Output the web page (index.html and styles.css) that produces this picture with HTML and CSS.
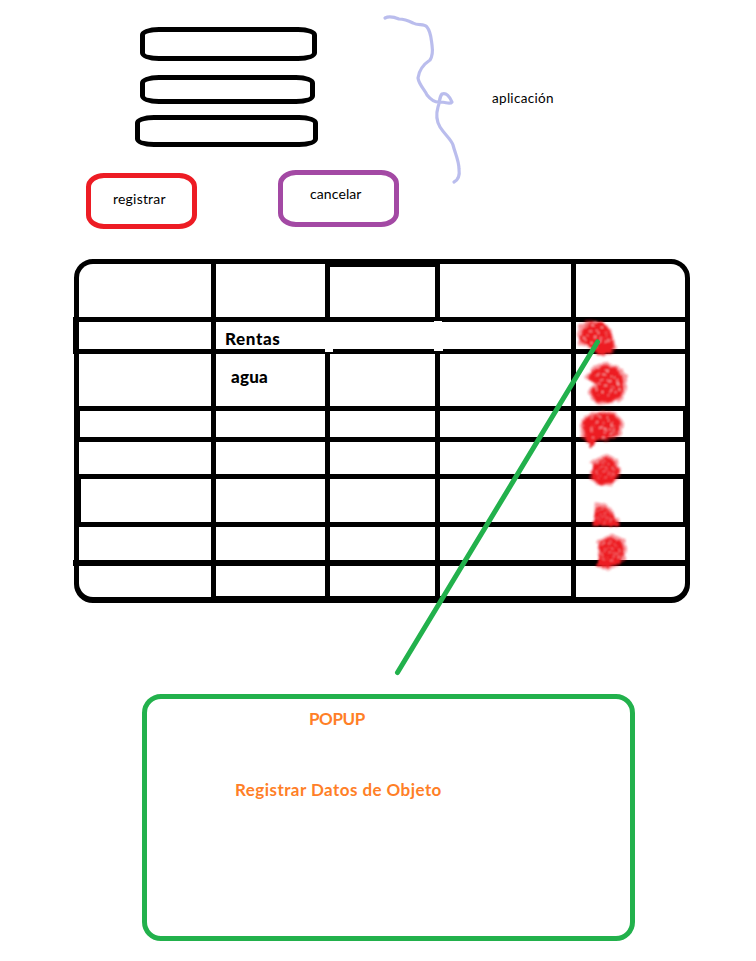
FILE: index.html
```html
<!DOCTYPE html>
<html lang="es">
<head>
<meta charset="utf-8">
<title>Registro</title>
<link rel="stylesheet" href="styles.css">
</head>
<body>
<main class="page">
  <header class="top">
    <div class="fields">
      <div class="field field-a"></div>
      <div class="field field-b"></div>
      <div class="field field-c"></div>
    </div>
    <svg class="brace" width="90" height="175" viewBox="380 12 90 175">
      <path d="M385 18C389 16 394 17 399 19C405 19 409 21 413 23C418 26 424 23 427 27C431 32 431 38 432 45C433 52 432 57 430 60C424 64 419 70 418 78C419 85 425 90 427 95C431 100 436 103 441 102C446 102 450 105 452 102C450 97 446 92 442 94C439 97 440 102 438 107C436 114 437 122 440 127C445 135 451 139 453 145C455 153 459 161 459 169C460 176 458 180 454 182"/>
    </svg>
    <span class="label">aplicación</span>
  </header>
  <div class="actions">
    <div class="btn register"><span>registrar</span></div>
    <div class="btn cancel"><span>cancelar</span></div>
  </div>
  <section class="table">
    <div class="cell"></div><div class="cell"></div><div class="cell thick-top"></div><div class="cell"></div><div class="cell"></div>
    <div class="cell bump-row"></div><div class="cell merged"><b class="rentas">Rentas</b><i class="notch n1"></i><i class="notch n2"></i><i class="notch n3"></i></div><div class="cell"></div>
    <div class="cell"></div><div class="cell"><b class="agua">agua</b></div><div class="cell"></div><div class="cell"></div><div class="cell"></div>
    <div class="cell in-l1"></div><div class="cell"></div><div class="cell"></div><div class="cell"></div><div class="cell in-r"></div>
    <div class="cell"></div><div class="cell"></div><div class="cell"></div><div class="cell"></div><div class="cell"></div>
    <div class="cell in-l2"></div><div class="cell"></div><div class="cell"></div><div class="cell"></div><div class="cell in-r"></div>
    <div class="cell"></div><div class="cell"></div><div class="cell"></div><div class="cell"></div><div class="cell"></div>
    <div class="cell last bump-line"></div><div class="cell last short"></div><div class="cell last short"></div><div class="cell last short"></div><div class="cell last"></div>
  </section>
  <section class="popup">
    <h1>POPUP</h1>
    <h2>Registrar Datos de Objeto</h2>
  </section>
  <svg class="marks" width="756" height="961" viewBox="0 0 756 961">
    <defs>
      <filter id="crayon" x="-20%" y="-20%" width="140%" height="140%">
        <feTurbulence type="fractalNoise" baseFrequency="0.22" numOctaves="2" seed="4" result="n"/>
        <feDisplacementMap in="SourceGraphic" in2="n" scale="4" xChannelSelector="R" yChannelSelector="G"/>
        <feGaussianBlur stdDeviation="0.8"/>
      </filter>
      <g id="flecks">
        <path d="M-11-7l3-4M-5-10l4 1M4-9l3 3M10-4l1 5M-12 2l2 4M-7-3l3-2M0-4l3 2M-3 2l4-1M6 3l3 1M-6 7l2 2M2 8l3-2M8 9l2-3M-10 10l2 1M-1 12l3-1M12 4l1 3M-2-13l3 1M3 2l2 3M-9-1l1 2"/>
      </g>
    </defs>
    <g filter="url(#crayon)">
      <g class="halo">
        <path d="M578 335L579 325L586 321L593 319L602 322L611 329L613 337L616 346L612 354L603 356L595 353L589 348L578 344Z"/>
        <path d="M584 377L591 372L593 366L604 362L618 366L627 376L627 389L622 400L612 403L600 405L592 400L588 391L595 384Z"/>
        <path d="M580 425L585 415L598 411L616 412L624 424L620 437L608 441L597 441L592 448L586 442L581 437Z"/>
        <path d="M590 462L606 454L617 459L621 470L618 480L611 486L598 485L590 479L590 471L596 467Z"/>
        <path d="M595 502L604 503L613 511L620 522L620 526L592 526L594 516Z"/>
        <path d="M597 541L605 537L612 534L624 539L627 549L625 560L616 567L606 570L595 566L599 558L597 551Z"/>
      </g>
      <g class="core">
        <path d="M583 332L587 324L596 321L605 326L610 334L613 346L610 352L601 354L594 349L588 344L581 340Z"/>
        <path d="M589 378L595 371L605 366L616 369L622 378L622 391L616 399L604 402L596 400L592 391L598 384Z"/>
        <path d="M584 424L589 417L600 414L614 415L620 424L616 434L606 438L596 439L592 446L587 440Z"/>
        <path d="M594 465L606 458L614 463L618 472L612 482L600 483L593 478Z"/>
        <path d="M597 508L605 508L611 514L618 525L594 525Z"/>
        <path d="M600 543L610 538L621 543L623 552L619 562L608 567L597 565L601 557Z"/>
      </g>
      <g class="fleck">
        <use href="#flecks" x="596" y="335"/>
        <use href="#flecks" x="607" y="384"/>
        <use href="#flecks" x="602" y="426"/>
        <use href="#flecks" transform="translate(605 470) scale(.75)"/>
        <use href="#flecks" transform="translate(604 516) scale(.6)"/>
        <use href="#flecks" transform="translate(611 551) scale(.8)"/>
      </g>
    </g>
    <path class="pointer" d="M597.500 342L397.500 672.500"/>
  </svg>
</main>
</body>
</html>
```
FILE: styles.css
```css
* { box-sizing: border-box; }
body { margin: 0; background: #fff; color: #000; font-family: Lato, "Noto Sans", sans-serif; }
.page { position: relative; width: 756px; height: 961px; overflow: hidden; }

.top { display: flex; height: 170px; padding-left: 135px; }
.fields { width: 245px; padding-top: 27px; }
.field { border: 5px solid #000; border-radius: 19px / 8px; }
.field-a { width: 177px; height: 34px; margin: 0 0 14px 5px; }
.field-b { width: 175px; height: 29px; margin: 0 0 11px 5px; }
.field-c { width: 183px; height: 32px; }
.brace { flex: none; margin-top: 12px; height: 175px; }
.brace path { fill: none; stroke: #3f48cc; stroke-opacity: .36; stroke-width: 3.2; stroke-linecap: round; stroke-linejoin: round; }
.label { margin: 90px 0 0 22px; font-size: 13.5px; line-height: 16px; letter-spacing: .3px; }

.actions { display: flex; gap: 81px; height: 89px; padding-left: 86px; }
.btn { border: 5px solid; border-radius: 18px / 14px; font-size: 14px; line-height: 16px; letter-spacing: .2px; }
.btn span { color: #000; display: block; }
.register { width: 111px; height: 56px; margin-top: 3px; padding: 13px 0 0 22px; border-color: #ed1c24; }
.cancel { width: 121px; height: 57px; padding: 11px 0 0 27px; border-color: #a349a4; letter-spacing: .1px; }

.table {
  display: grid;
  grid-template-columns: 132px 109px 105px 131px 109px;
  grid-template-rows: 53px 27px 52px 26px 32px 43px 33px 32px;
  gap: 5px;
  width: 616px; height: 344px; margin-left: 74px;
  border: 5px solid #000; border-radius: 19px; background: #000;
}
.cell { position: relative; background: #fff; }
.cell:first-child { border-top-left-radius: 14px; }
.cell:nth-child(5) { border-top-right-radius: 14px; }
.cell.bump-line { border-bottom-left-radius: 14px; }
.cell:last-child { border-bottom-right-radius: 14px; }
.cell b { display: block; font-weight: 900; font-size: 17px; line-height: 20px; letter-spacing: .6px; }
.rentas { padding: 7px 0 0 9px; }
.cell .agua { padding: 13px 0 0 15px; letter-spacing: .2px; }
.merged { grid-column: span 3; }
.thick-top { margin-top: 3px; }
.last { margin-top: 1px; }
.short { margin-bottom: 1px; }
.in-l1 { margin-left: 1px; }
.in-l2 { margin-left: 2px; }
.in-r { margin-right: 2px; }
.bump-row::before, .bump-line::before { content: ""; position: absolute; left: -6px; width: 6px; background: #000; }
.bump-row::before { top: -5px; height: 37px; }
.bump-line::before { top: -6px; height: 6px; }
.notch { position: absolute; height: 3px; width: 8px; background: #fff; }
.n1 { left: 109px; top: 27px; }
.n2 { left: 218px; top: -1px; }
.n3 { left: 218px; top: 27px; height: 2px; width: 9px; }

.popup { width: 493px; height: 247px; margin: 91px 0 0 142px; padding-top: 10px; border: 5px solid #22b14c; border-radius: 19px; color: #ff7f27; }
.popup h1, .popup h2 { margin: 0; font-size: 17px; line-height: 20px; font-weight: 700; }
.popup h1 { padding-left: 162px; letter-spacing: -.4px; }
.popup h2 { padding: 51px 0 0 88px; letter-spacing: .44px; }

.marks { position: absolute; inset: 0; pointer-events: none; }
.halo { fill: #ed1c24; fill-opacity: .45; }
.core { fill: #ed1c24; stroke: #ed1c24; stroke-width: 2; }
.fleck { fill: none; stroke: #fff; stroke-opacity: .7; stroke-width: 1; }
.pointer { stroke: #22b14c; stroke-width: 5; stroke-linecap: round; }
```
